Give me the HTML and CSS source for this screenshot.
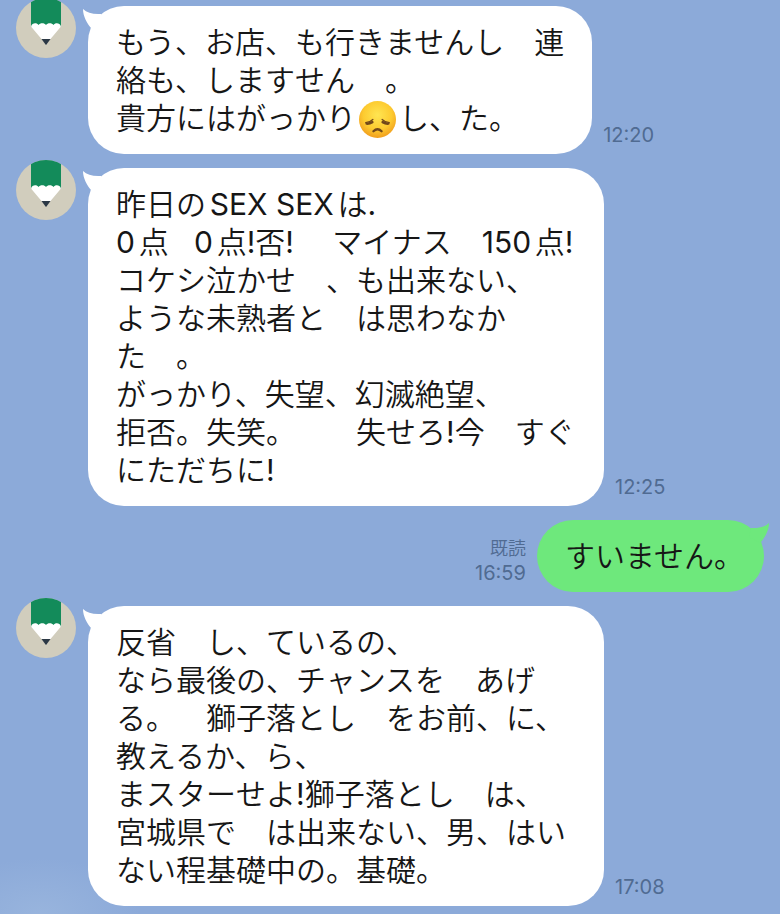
FILE: index.html
```html
<!DOCTYPE html>
<html lang="ja">
<head>
<meta charset="utf-8">
<meta name="viewport" content="width=device-width, initial-scale=1">
<title>トーク</title>
<link rel="stylesheet" href="styles.css">
</head>
<body>
<svg class="defs" aria-hidden="true">
  <defs>
    <clipPath id="disc"><circle cx="30" cy="30" r="30"/></clipPath>
    <radialGradient id="face" cx="50%" cy="38%" r="64%">
      <stop offset="0" stop-color="#ffe552"/>
      <stop offset="0.6" stop-color="#fdcb30"/>
      <stop offset="1" stop-color="#f09a1c"/>
    </radialGradient>
    <symbol id="pencil" viewBox="0 0 60 60">
      <g clip-path="url(#disc)">
        <rect width="60" height="60" fill="#d1cdbd"/>
        <path d="M15 0H45V29H15Z" fill="#138b5a"/>
        <path d="M15 28.500C16 24.500 21 24.500 22.500 27C24 24.500 28.500 24.500 30 27C31.500 24.500 36 24.500 37.500 27C39 24.500 44 24.500 45 28.500L34.500 41H25.500Z" fill="#fff"/>
        <path d="M25.500 41H34.500L30.500 46.500Q30 47 29.500 46.500Z" fill="#2b3845"/>
      </g>
    </symbol>
    <symbol id="tail" viewBox="0 0 20 22">
      <path d="M0 0C4 4 10 5.500 18 5L20 14L9 20C4 15 0 7 0 0Z" fill="currentColor"/>
    </symbol>
  </defs>
</svg>
<main class="chat">
  <article class="message">
    <svg class="avatar" role="img" aria-label="鉛筆"><use href="#pencil"/></svg>
    <div class="bubble">
      <svg class="tail" aria-hidden="true"><use href="#tail"/></svg>
      <p class="text">もう、お店、も行きませんし　連<br>絡も、しますせん　。<br>貴方にはがっかり<svg class="emoji" viewBox="0 0 36 36" role="img" aria-label="がっかりした顔"><circle cx="18" cy="18" r="18" fill="url(#face)"/><g fill="none" stroke="#71471a" stroke-linecap="round"><path d="M7.500 22Q10 22.300 13 20.500M28.500 22Q26 22.300 23 20.500" stroke-width="2.400"/><path d="M6.500 21Q11 20.500 13.500 18M29.500 21Q25 20.500 22.500 18" stroke-width="1.200"/><path d="M14 29.500Q18 25.500 22 29.500" stroke-width="2.200"/></g></svg>し、た。</p>
    </div>
    <div class="meta"><time>12:20</time></div>
  </article>

  <article class="message">
    <svg class="avatar" role="img" aria-label="鉛筆"><use href="#pencil"/></svg>
    <div class="bubble bubble-full">
      <svg class="tail" aria-hidden="true"><use href="#tail"/></svg>
      <p class="text">昨日のSEX SEXは.<br>0点&nbsp;&nbsp; 0点!否! 　マイナス　150点!<br>コケシ泣かせ　、も出来ない、<br>ような未熟者と　は思わなか<br>た　。<br>がっかり、失望、幻滅絶望、<br>拒否。失笑。　　失せろ!今　すぐ<br>にただちに!</p>
    </div>
    <div class="meta"><time>12:25</time></div>
  </article>

  <article class="message message-own">
    <div class="meta"><span class="read">既読</span><time>16:59</time></div>
    <div class="bubble bubble-own">
      <svg class="tail tail-own" aria-hidden="true"><use href="#tail"/></svg>
      <p class="text">すいません。</p>
    </div>
  </article>

  <article class="message">
    <svg class="avatar" role="img" aria-label="鉛筆"><use href="#pencil"/></svg>
    <div class="bubble bubble-full">
      <svg class="tail" aria-hidden="true"><use href="#tail"/></svg>
      <p class="text">反省　し、ているの、<br>なら最後の、チャンスを　あげ<br>る。　獅子落とし　をお前、に、<br>教えるか、ら、<br>まスターせよ!獅子落とし　は、<br>宮城県で　は出来ない、男、はい<br>ない程基礎中の。基礎。</p>
    </div>
    <div class="meta"><time>17:08</time></div>
  </article>
</main>
</body>
</html>
```
FILE: styles.css
```css
* {
  box-sizing: border-box;
}

body {
  margin: 0;
  min-height: 100vh;
  background:
    radial-gradient(ellipse 100px 56px at 40px 100%, rgba(160, 187, 224, 0.6), transparent) no-repeat,
    #8caad9;
  color: #161616;
  font-family: Inter, "Noto Sans CJK JP DemiLight", "Noto Sans CJK JP Light", "Noto Sans CJK JP", sans-serif;
}

.defs {
  position: absolute;
  width: 0;
  height: 0;
}

.chat {
  display: flex;
  flex-direction: column;
  gap: 14px;
  padding: 6px 16px 8px;
  overflow: hidden;
}

.message {
  display: flex;
  align-items: flex-start;
}

.message-own {
  justify-content: flex-end;
}

.avatar {
  flex: none;
  width: 60px;
  height: 60px;
  margin: -8px 12px 0 0;
}

.bubble {
  position: relative;
  padding: 17px 28px;
  border-radius: 36px;
  background: #fff;
}

.bubble-full {
  width: 516px;
}

.bubble-own {
  padding-right: 20px;
  background: #6ee87c;
}

.tail {
  position: absolute;
  top: 3px;
  left: -5px;
  width: 20px;
  height: 22px;
  color: #fff;
}

.tail-own {
  left: auto;
  right: -5px;
  color: #6ee87c;
  transform: scaleX(-1);
}

.text {
  margin: 0;
  font-size: 30px;
  line-height: 38px;
  white-space: nowrap;
  text-autospace: normal;
  text-spacing-trim: space-all;
}

.emoji {
  width: 37px;
  height: 37px;
  margin: -4px 3px;
  vertical-align: -5px;
}

.meta {
  display: flex;
  flex-direction: column;
  align-self: flex-end;
  margin: 0 11px 7px;
  color: #506b92;
  font-size: 20px;
  line-height: 24px;
  text-align: right;
}

.read {
  font-size: 18px;
}
```
